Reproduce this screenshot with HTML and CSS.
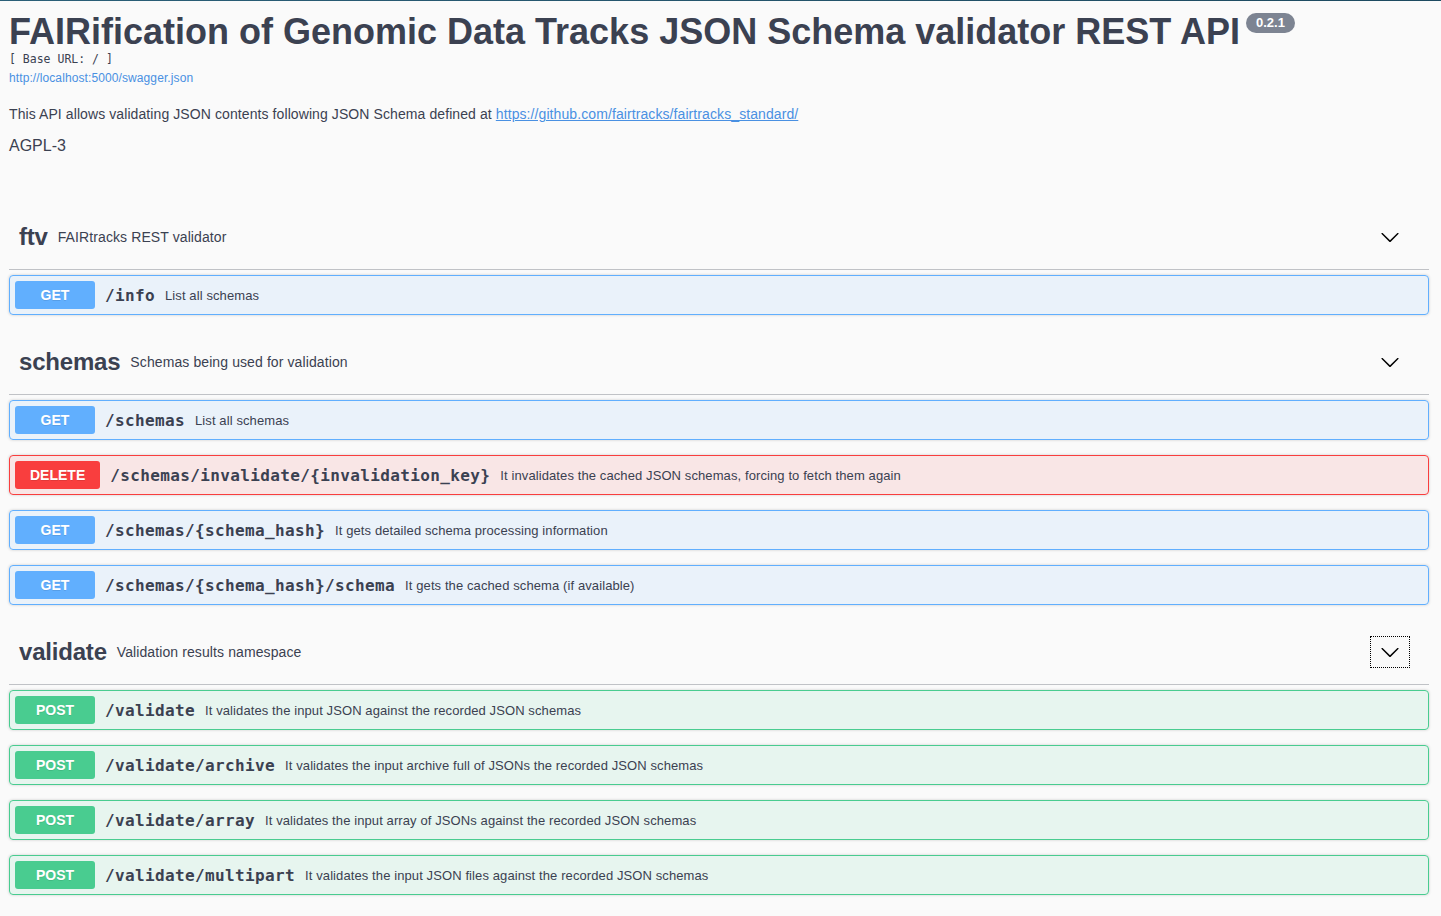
FILE: index.html
```html
<!DOCTYPE html>
<html lang="en">
<head>
<meta charset="utf-8">
<title>FAIRification of Genomic Data Tracks JSON Schema validator REST API</title>
<link rel="stylesheet" href="styles.css">
</head>
<body>
<div class="topline"></div>
<div class="wrapper">
  <div class="info">
    <h2 class="title">FAIRification of Genomic Data Tracks JSON Schema validator REST API<span class="version">0.2.1</span></h2>
    <pre class="base-url">[ Base URL: / ]</pre>
    <a class="spec-link" href="#">http://localhost:5000/swagger.json</a>
    <p class="description">This API allows validating JSON contents following JSON Schema defined at <a href="#">https://github.com/fairtracks/fairtracks_standard/</a></p>
    <div class="license">AGPL-3</div>
  </div>

  <section class="tag-section">
    <div class="tag">
      <h4 class="tag-name">ftv</h4>
      <small class="tag-desc">FAIRtracks REST validator</small>
      <button class="expand"><svg viewBox="0 0 20 20" width="20" height="20"><path d="M17.418 6.109c.272-.268.709-.268.979 0s.271.701 0 .969l-7.908 7.83c-.27.268-.707.268-.979 0l-7.908-7.83c-.27-.268-.27-.701 0-.969.271-.268.709-.268.979 0L10 13.25l7.418-7.141z"/></svg></button>
    </div>
    <div class="opblock get"><span class="method">GET</span><span class="path">/info</span><span class="summary">List all schemas</span></div>
  </section>

  <section class="tag-section">
    <div class="tag">
      <h4 class="tag-name">schemas</h4>
      <small class="tag-desc">Schemas being used for validation</small>
      <button class="expand"><svg viewBox="0 0 20 20" width="20" height="20"><path d="M17.418 6.109c.272-.268.709-.268.979 0s.271.701 0 .969l-7.908 7.83c-.27.268-.707.268-.979 0l-7.908-7.83c-.27-.268-.27-.701 0-.969.271-.268.709-.268.979 0L10 13.25l7.418-7.141z"/></svg></button>
    </div>
    <div class="opblock get"><span class="method">GET</span><span class="path">/schemas</span><span class="summary">List all schemas</span></div>
    <div class="opblock delete"><span class="method">DELETE</span><span class="path">/schemas/invalidate/{invalidation_key}</span><span class="summary">It invalidates the cached JSON schemas, forcing to fetch them again</span></div>
    <div class="opblock get"><span class="method">GET</span><span class="path">/schemas/{schema_hash}</span><span class="summary">It gets detailed schema processing information</span></div>
    <div class="opblock get"><span class="method">GET</span><span class="path">/schemas/{schema_hash}/schema</span><span class="summary">It gets the cached schema (if available)</span></div>
  </section>

  <section class="tag-section">
    <div class="tag">
      <h4 class="tag-name">validate</h4>
      <small class="tag-desc">Validation results namespace</small>
      <button class="expand focused"><svg viewBox="0 0 20 20" width="20" height="20"><path d="M17.418 6.109c.272-.268.709-.268.979 0s.271.701 0 .969l-7.908 7.83c-.27.268-.707.268-.979 0l-7.908-7.83c-.27-.268-.27-.701 0-.969.271-.268.709-.268.979 0L10 13.25l7.418-7.141z"/></svg></button>
    </div>
    <div class="opblock post"><span class="method">POST</span><span class="path">/validate</span><span class="summary">It validates the input JSON against the recorded JSON schemas</span></div>
    <div class="opblock post"><span class="method">POST</span><span class="path">/validate/archive</span><span class="summary">It validates the input archive full of JSONs the recorded JSON schemas</span></div>
    <div class="opblock post"><span class="method">POST</span><span class="path">/validate/array</span><span class="summary">It validates the input array of JSONs against the recorded JSON schemas</span></div>
    <div class="opblock post"><span class="method">POST</span><span class="path">/validate/multipart</span><span class="summary">It validates the input JSON files against the recorded JSON schemas</span></div>
  </section>
</div>
</body>
</html>
```

FILE: styles.css
```css
html, body {
  margin: 0;
  padding: 0;
}
body {
  background: #fafafa;
  font-family: "Liberation Sans", Arial, sans-serif;
  color: #3b4151;
}
.topline {
  height: 1px;
  background: linear-gradient(90deg, #2b5f78, #1d4a60);
}
.wrapper {
  padding: 0 12px 0 9px;
}
.info {
  padding-top: 11px;
  margin-bottom: 49px;
}
.title {
  margin: 0;
  font-size: 36px;
  font-weight: 700;
  line-height: 39px;
  color: #3b4151;
}
.version {
  display: inline-block;
  vertical-align: top;
  margin: 1px 0 0 6px;
  padding: 2px 10px;
  border-radius: 57px;
  background: #7d8492;
  color: #fff;
  font-size: 13px;
  line-height: 16px;
  font-weight: 700;
}
.base-url {
  margin: 0;
  font-family: "DejaVu Sans Mono", monospace;
  font-size: 11.5px;
  line-height: 16px;
  font-weight: 300;
  color: #3b4151;
}
.spec-link {
  display: block;
  margin-top: 3px;
  font-size: 12px;
  line-height: 16px;
  letter-spacing: 0.1px;
  color: #4990e2;
  text-decoration: none;
}
.description {
  margin: 19px 0 0;
  font-size: 14px;
  line-height: 18px;
  letter-spacing: 0.09px;
}
.description a {
  color: #4990e2;
}
.license {
  margin-top: 13px;
  font-size: 16px;
  line-height: 20px;
}
.tag-section {
  display: flex;
  flex-direction: column;
}
.tag {
  display: flex;
  align-items: center;
  height: 44px;
  padding: 10px 20px 10px 10px;
  margin-bottom: 5px;
  border-bottom: 1px solid rgba(59, 65, 81, 0.3);
}
.tag-name {
  margin: 0;
  font-size: 24px;
  font-weight: 700;
  letter-spacing: -0.2px;
}
.tag-desc {
  flex: 1;
  padding: 0 10px;
  font-size: 14px;
  letter-spacing: 0.1px;
}
.expand {
  border: none;
  background: none;
  padding: 5px 9px;
  display: flex;
  cursor: pointer;
}
.expand svg {
  fill: #000;
}
.expand.focused {
  outline: 1px dotted #000;
}
.opblock {
  display: flex;
  align-items: center;
  padding: 5px;
  margin-bottom: 15px;
  border: 1px solid;
  border-radius: 4px;
  box-shadow: 0 0 3px rgba(0, 0, 0, 0.19);
}
.method {
  min-width: 80px;
  box-sizing: border-box;
  padding: 6px 15px;
  border-radius: 3px;
  text-align: center;
  font-size: 14px;
  line-height: 16px;
  font-weight: 700;
  color: #fff;
  text-shadow: 0 1px 0 rgba(0, 0, 0, 0.1);
}
.path {
  padding: 0 10px;
  font-family: "DejaVu Sans Mono", monospace;
  font-size: 16px;
  font-weight: 700;
  letter-spacing: 0.37px;
  color: #3b4151;
}
.summary {
  font-size: 13px;
  letter-spacing: 0.1px;
  color: #3b4151;
}
.get { background: rgba(97, 175, 254, 0.1); border-color: #61affe; }
.get .method { background: #61affe; }
.delete { background: rgba(249, 62, 62, 0.1); border-color: #f93e3e; }
.delete .method { background: #f93e3e; }
.post { background: rgba(73, 204, 144, 0.1); border-color: #49cc90; }
.post .method { background: #49cc90; }
```
